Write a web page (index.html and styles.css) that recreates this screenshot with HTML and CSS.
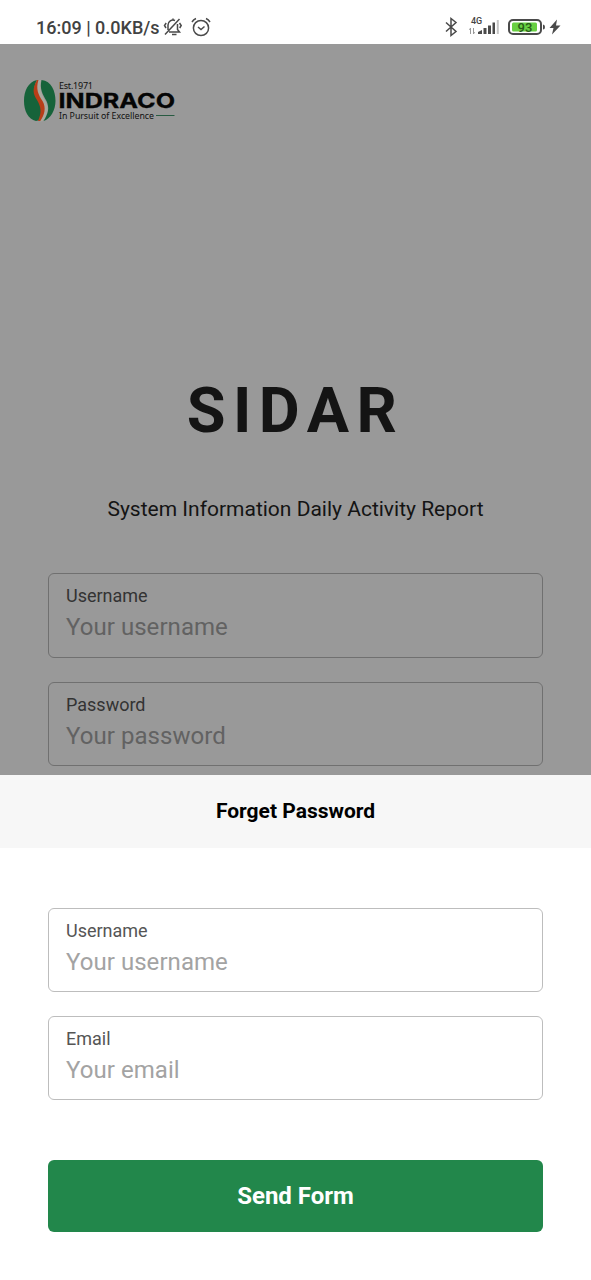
FILE: index.html
```html
<!DOCTYPE html>
<html lang="en">
<head>
<meta charset="utf-8">
<title>SIDAR</title>
<link rel="stylesheet" href="styles.css">
</head>
<body>
<header class="status">
  <span class="status-text">16:09 | 0.0KB/s</span>
  <svg class="bell" width="20" height="20" viewBox="0 0 20 20" fill="none" stroke="#4a4a4a" stroke-width="1.5">
    <path d="M5 13V8a5 5 0 0 1 7-4.500M14.500 7v5.500l2 2.500H6M9 17.500h4.500M2 17.500 16.500 2M3.200 6 1.500 8.500 3 11M16.500 6l1.700 2.500-1.500 2.500M10 1.500v2"/>
  </svg>
  <svg class="alarm" width="20" height="20" viewBox="0 0 20 20" fill="none" stroke="#4a4a4a" stroke-width="1.500">
    <circle cx="10" cy="11" r="7.600"/><path d="M1 5Q2.500 2.500 5 1.500M19 5Q17.500 2.500 15 1.500M7 10l3 2.500 3.500-3"/>
  </svg>
  <svg class="radios" width="120" height="24" viewBox="443 15 120 24">
    <path d="M446 22.500 456 31.500 451 35.500V18.500L456 22.500 446 31.500" fill="none" stroke="#4a4a4a" stroke-width="1.500"/>
    <text class="net" x="471" y="24">4G</text>
    <path d="M470.500 34v-6M473.500 28v6M469.500 30l1-2M474.500 32l-1 2" stroke="#999" fill="none"/>
    <path d="M478 34v-2l4-2v4zM483.500 28h3v6h-3zM488 25.500h3v8.500h-3zM492.500 22.500h2.500v11.500h-2.500z" fill="#4a4a4a"/>
    <path d="M496.800 20h2v14h-2z" fill="#c4c4c4"/>
    <rect x="509" y="20" width="32" height="14" rx="4" fill="#fff" stroke="#4a4a4a" stroke-width="2"/>
    <rect x="512" y="22.500" width="25" height="9" rx="1.500" fill="#68cf42"/>
    <text class="level" x="525" y="31.500" text-anchor="middle">93</text>
    <path d="M543 24.500q2 0 2 2.500t-2 2.500z" fill="#4a4a4a"/>
    <path d="M557 19.500 549.500 28h4l-1.500 6.500 8.500-9h-4.500z" fill="#4a4a4a"/>
  </svg>
</header>
<main class="login">
  <svg class="logo" width="152" height="46" viewBox="23 78 152 46">
    <path d="M37 80C28 82 24 91 24 101c0 10 4 18 12 20l4-1c4-8 3-14-1-20-5-7-6-12-2-20z" fill="#16633a"/>
    <path d="M37 80c-5 9-4 14 0 20 4 7 5 12 1 21h3c4-6 6-12 3-19-4-7-8-12-5-22z" fill="#b83e18"/>
    <path d="M38.500 80c-3 9 0 15 4 21 4 7 2 14-2.500 20.500l3-.5c5-7 6-12 3-19-4-7-7-13-5-22z" fill="#aaa99f"/>
    <path d="M41.500 80c10 1 14 11 14 21 0 9-5 18-12 20 5-8 6-13 3-20-4-7-7-12-5-21z" fill="#16633a"/>
    <text class="est" x="59" y="88.700" textLength="34">Est.1971</text>
    <text class="brand" x="58.500" y="107.700" textLength="116.500" lengthAdjust="spacingAndGlyphs">INDRACO</text>
    <text class="motto" x="59" y="119.300" textLength="95">In Pursuit of Excellence</text>
    <path d="M156 115.500h18.500" stroke="#285b42"/>
  </svg>
  <h1 class="title">SIDAR</h1>
  <p class="subtitle">System Information Daily Activity Report</p>
  <div class="fields">
    <div class="field"><span class="label">Username</span><span class="hint">Your username</span></div>
    <div class="field"><span class="label">Password</span><span class="hint">Your password</span></div>
  </div>
</main>
<section class="sheet">
  <h2 class="sheet-title">Forget Password</h2>
  <div class="fields">
    <div class="field"><span class="label">Username</span><span class="hint">Your username</span></div>
    <div class="field"><span class="label">Email</span><span class="hint">Your email</span></div>
  </div>
  <button class="send">Send Form</button>
</section>
</body>
</html>
```
FILE: styles.css
```css
* { box-sizing: border-box; }
body { margin: 0; height: 1280px; overflow: hidden; display: flex; flex-direction: column; background: #fff; font-family: Roboto, sans-serif; }
.status { height: 44px; flex: none; display: flex; align-items: center; padding: 10px 28px 0 36px; color: #424242; }
.status-text { font-size: 18px; font-weight: 500; width: 127px; white-space: nowrap; }
.alarm { margin-left: 8px; }
.radios { margin-left: auto; }
.net { font-size: 9px; font-weight: 500; fill: #444; }
.level { font-size: 13px; font-weight: 500; fill: #285c18; }
.login { height: 731px; flex: none; overflow: hidden; background: #999; display: flex; flex-direction: column; padding: 34px 48px 0; }
.logo { margin-left: -25px; flex: none; }
.est { font: 9px "Noto Sans", sans-serif; fill: #101010; }
.brand { font: 700 20.500px Inter, sans-serif; fill: #050505; stroke: #050505; stroke-width: 0.3px; }
.motto { font: 8.800px "Noto Sans", sans-serif; fill: #101010; }
.title { margin: 250px 0 0; height: 74px; line-height: 74px; font-size: 63px; font-weight: 700; letter-spacing: 7.500px; text-align: center; color: #141414; }
.subtitle { margin: 48px 0 0; height: 26px; line-height: 26px; font-size: 21px; text-align: center; color: #141414; white-space: nowrap; }
.fields { display: flex; flex-direction: column; gap: 24px; }
.login .fields { margin-top: 51px; }
.field { height: 84.500px; flex: none; border: 1px solid #bdbdbd; border-radius: 6px; padding: 11px 17px; display: flex; flex-direction: column; color: #555; }
.login .field { border-color: #707070; color: #333; }
.label { font-size: 18px; line-height: 22px; }
.hint { margin-top: 6px; font-size: 24px; line-height: 29px; letter-spacing: 0.050px; color: #a3a3a3; }
.login .hint { color: #626262; }
.sheet { height: 505px; flex: none; background: #fff; }
.sheet-title { margin: 0; height: 73px; line-height: 73px; background: #f7f7f7; text-align: center; font-size: 21px; font-weight: 700; color: #000; }
.sheet .fields { padding: 60px 48px 0; }
.sheet .field { height: 84px; }
.send { display: block; width: 495px; height: 72px; margin: 60px 48px 0; border: 0; border-radius: 6px; background: #22874b; color: #fff; font: 700 24px Roboto, sans-serif; }
```
